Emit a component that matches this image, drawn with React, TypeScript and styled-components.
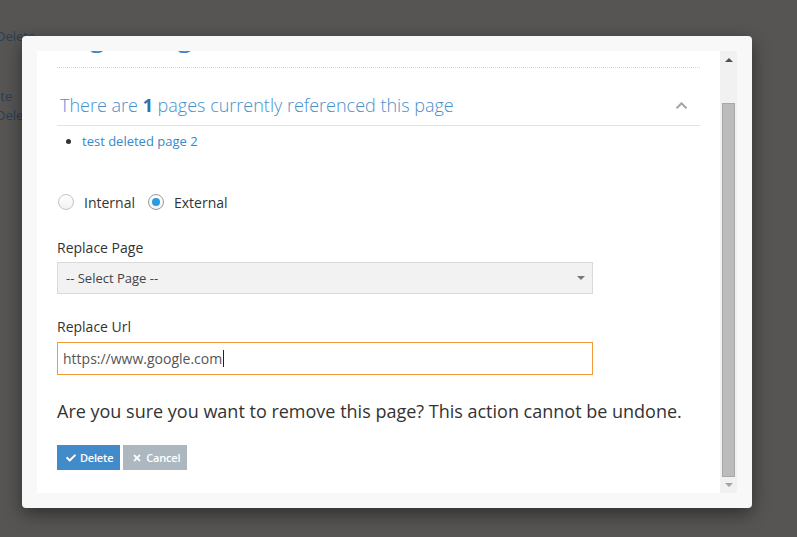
import React, { useLayoutEffect, useRef } from 'react'
import styled, { createGlobalStyle } from 'styled-components'
import { FaCheck, FaTimes, FaChevronUp } from 'react-icons/fa'

const GlobalStyle = createGlobalStyle`
    html, body {
        margin: 0;
        padding: 0;
        height: 100%;
        background: #565553;
        font-family: "Open Sans", "Liberation Sans", Arial, sans-serif;
        overflow: hidden;
    }
`

const BackPage = styled.div`
    display: flex;
    flex-direction: column;
    padding-top: 27px;
`

const BackLink = styled.span<{ $shift: number; $gap: number }>`
    font-size: 13px;
    line-height: 18px;
    color: #2c3d55;
    margin-left: ${p => p.$shift}px;
    margin-top: ${p => p.$gap}px;
    white-space: nowrap;
`

const Overlay = styled.div`
    position: fixed;
    inset: 0;
    display: flex;
    align-items: flex-start;
    padding: 36px 0 0 22px;
`

const ModalBox = styled.div`
    width: 700px;
    padding: 15px;
    background: #f8f8f8;
    border-radius: 4px;
    box-shadow: 0 6px 18px rgba(0, 0, 0, 0.45);
    display: flex;
`

const Pane = styled.div`
    flex: 1;
    height: 442px;
    overflow: hidden;
    background: #fff;
    padding: 0 20px 23px;
    box-sizing: border-box;
`

const PageTitle = styled.h3`
    margin: 0;
    font-size: 28px;
    line-height: 36px;
    font-weight: 400;
    color: #3c86c6;
    padding-bottom: 14px;
    border-bottom: 1px dotted #d6d6d6;
`

const SectionHead = styled.div`
    margin-top: 17px;
    padding: 8px 0;
    display: flex;
    align-items: center;
    justify-content: space-between;
    border-bottom: 1px solid #dbe5ef;
`

const SectionTitle = styled.span`
    font-size: 18px;
    line-height: 24px;
    font-weight: 300;
    color: #4a8fca;
    padding-left: 3px;
    b {
        color: #2f71ad;
        font-weight: 700;
    }
`

const Chevron = styled.span`
    color: #a6a6a6;
    display: flex;
    margin-right: 12px;
`

const RefList = styled.ul`
    margin: 6px 0 0;
    padding-left: 25px;
    li {
        font-size: 13px;
        line-height: 18px;
        color: #333;
    }
    a {
        color: #3a87c9;
        text-decoration: none;
    }
`

const RadioRow = styled.div`
    margin-top: 42px;
    display: flex;
    align-items: center;
    height: 20px;
`

const RadioItem = styled.label`
    display: flex;
    align-items: center;
    font-size: 14px;
    color: #333;
    margin-right: 12px;
`

const RadioDot = styled.span<{ $on?: boolean }>`
    width: 16px;
    height: 16px;
    border-radius: 50%;
    box-sizing: border-box;
    border: 1px solid ${p => (p.$on ? '#9a9a9a' : '#c4c4c4')};
    background: linear-gradient(#fff, #f1f1f1);
    margin: 0 10px 0 1px;
    display: flex;
    align-items: center;
    justify-content: center;
    &::after {
        content: '';
        width: 8px;
        height: 8px;
        border-radius: 50%;
        background: ${p => (p.$on ? '#2b9be0' : 'transparent')};
    }
`

const FieldLabel = styled.div<{ $gap: number }>`
    margin-top: ${p => p.$gap}px;
    font-size: 14px;
    line-height: 20px;
    color: #333;
`

const SelectBox = styled.div`
    margin-top: 4px;
    width: 536px;
    height: 32px;
    box-sizing: border-box;
    background: #f2f2f2;
    border: 1px solid #dadada;
    display: flex;
    align-items: center;
    justify-content: space-between;
    padding: 0 7px 0 8px;
    font-size: 13px;
    color: #444;
`

const Caret = styled.span`
    width: 0;
    height: 0;
    border-left: 4px solid transparent;
    border-right: 4px solid transparent;
    border-top: 4px solid #777;
`

const UrlField = styled.div`
    margin-top: 5px;
    width: 536px;
    height: 33px;
    box-sizing: border-box;
    border: 1px solid #f39a3b;
    display: flex;
    align-items: center;
    padding: 0 5px;
    font-size: 14px;
    color: #555;
`

const TextCursor = styled.span`
    display: inline-block;
    width: 1px;
    height: 17px;
    background: #222;
    margin-left: 1px;
`

const Warning = styled.p`
    margin: 23px 0 0;
    font-size: 18px;
    line-height: 26px;
    color: #333;
`

const Actions = styled.div`
    margin-top: 21px;
    display: flex;
    gap: 3px;
`

const Btn = styled.button<{ $kind: 'primary' | 'muted' }>`
    height: 25px;
    border: 0;
    border-radius: 0;
    padding: 0 7px 0 9px;
    display: flex;
    align-items: center;
    gap: 4px;
    font-family: "Open Sans", "Liberation Sans", Arial, sans-serif;
    font-size: 11px;
    font-weight: 600;
    letter-spacing: -0.2px;
    color: #fff;
    background: ${p => (p.$kind === 'primary' ? '#428bca' : '#acb7bf')};
    svg {
        font-size: 10px;
    }
`

const ScrollBar = styled.div`
    width: 17px;
    height: 442px;
    background: #f1f1f1;
    display: flex;
    flex-direction: column;
    align-items: center;
`

const ArrowUp = styled.span`
    margin-top: 7px;
    width: 0;
    height: 0;
    border-left: 4px solid transparent;
    border-right: 4px solid transparent;
    border-bottom: 4px solid #505050;
`

const Thumb = styled.div`
    margin-top: 41px;
    width: 13px;
    height: 374px;
    box-sizing: border-box;
    background: #bcbcbc;
    border: 1px solid #a8a8a8;
`

const ArrowDown = styled.span`
    margin-top: 6px;
    width: 0;
    height: 0;
    border-left: 4px solid transparent;
    border-right: 4px solid transparent;
    border-top: 4px solid #a3a3a3;
`

const App: React.FC = () => {
    const paneRef = useRef<HTMLDivElement>(null)

    useLayoutEffect(() => {
        if (paneRef.current) {
            paneRef.current.scrollTop = paneRef.current.scrollHeight
        }
    }, [])

    return (
        <>
            <GlobalStyle />
            <BackPage>
                <BackLink $shift={-4} $gap={0}>Delete</BackLink>
                <BackLink $shift={-27} $gap={42}>Delete</BackLink>
                <BackLink $shift={-4} $gap={1}>Delete</BackLink>
            </BackPage>
            <Overlay>
                <ModalBox>
                    <Pane ref={paneRef}>
                        <PageTitle>Page Usage</PageTitle>
                        <SectionHead>
                            <SectionTitle>
                                There are <b>1</b> pages currently referenced this page
                            </SectionTitle>
                            <Chevron><FaChevronUp size={13} /></Chevron>
                        </SectionHead>
                        <RefList>
                            <li><a href="#">test deleted page 2</a></li>
                        </RefList>
                        <RadioRow>
                            <RadioItem><RadioDot />Internal</RadioItem>
                            <RadioItem><RadioDot $on />External</RadioItem>
                        </RadioRow>
                        <FieldLabel $gap={26}>Replace Page</FieldLabel>
                        <SelectBox>
                            <span>-- Select Page --</span>
                            <Caret />
                        </SelectBox>
                        <FieldLabel $gap={23}>Replace Url</FieldLabel>
                        <UrlField>
                            https://www.google.com<TextCursor />
                        </UrlField>
                        <Warning>Are you sure you want to remove this page? This action cannot be undone.</Warning>
                        <Actions>
                            <Btn $kind="primary"><FaCheck /> Delete</Btn>
                            <Btn $kind="muted"><FaTimes /> Cancel</Btn>
                        </Actions>
                    </Pane>
                    <ScrollBar>
                        <ArrowUp />
                        <Thumb />
                        <ArrowDown />
                    </ScrollBar>
                </ModalBox>
            </Overlay>
        </>
    )
}

export default App
